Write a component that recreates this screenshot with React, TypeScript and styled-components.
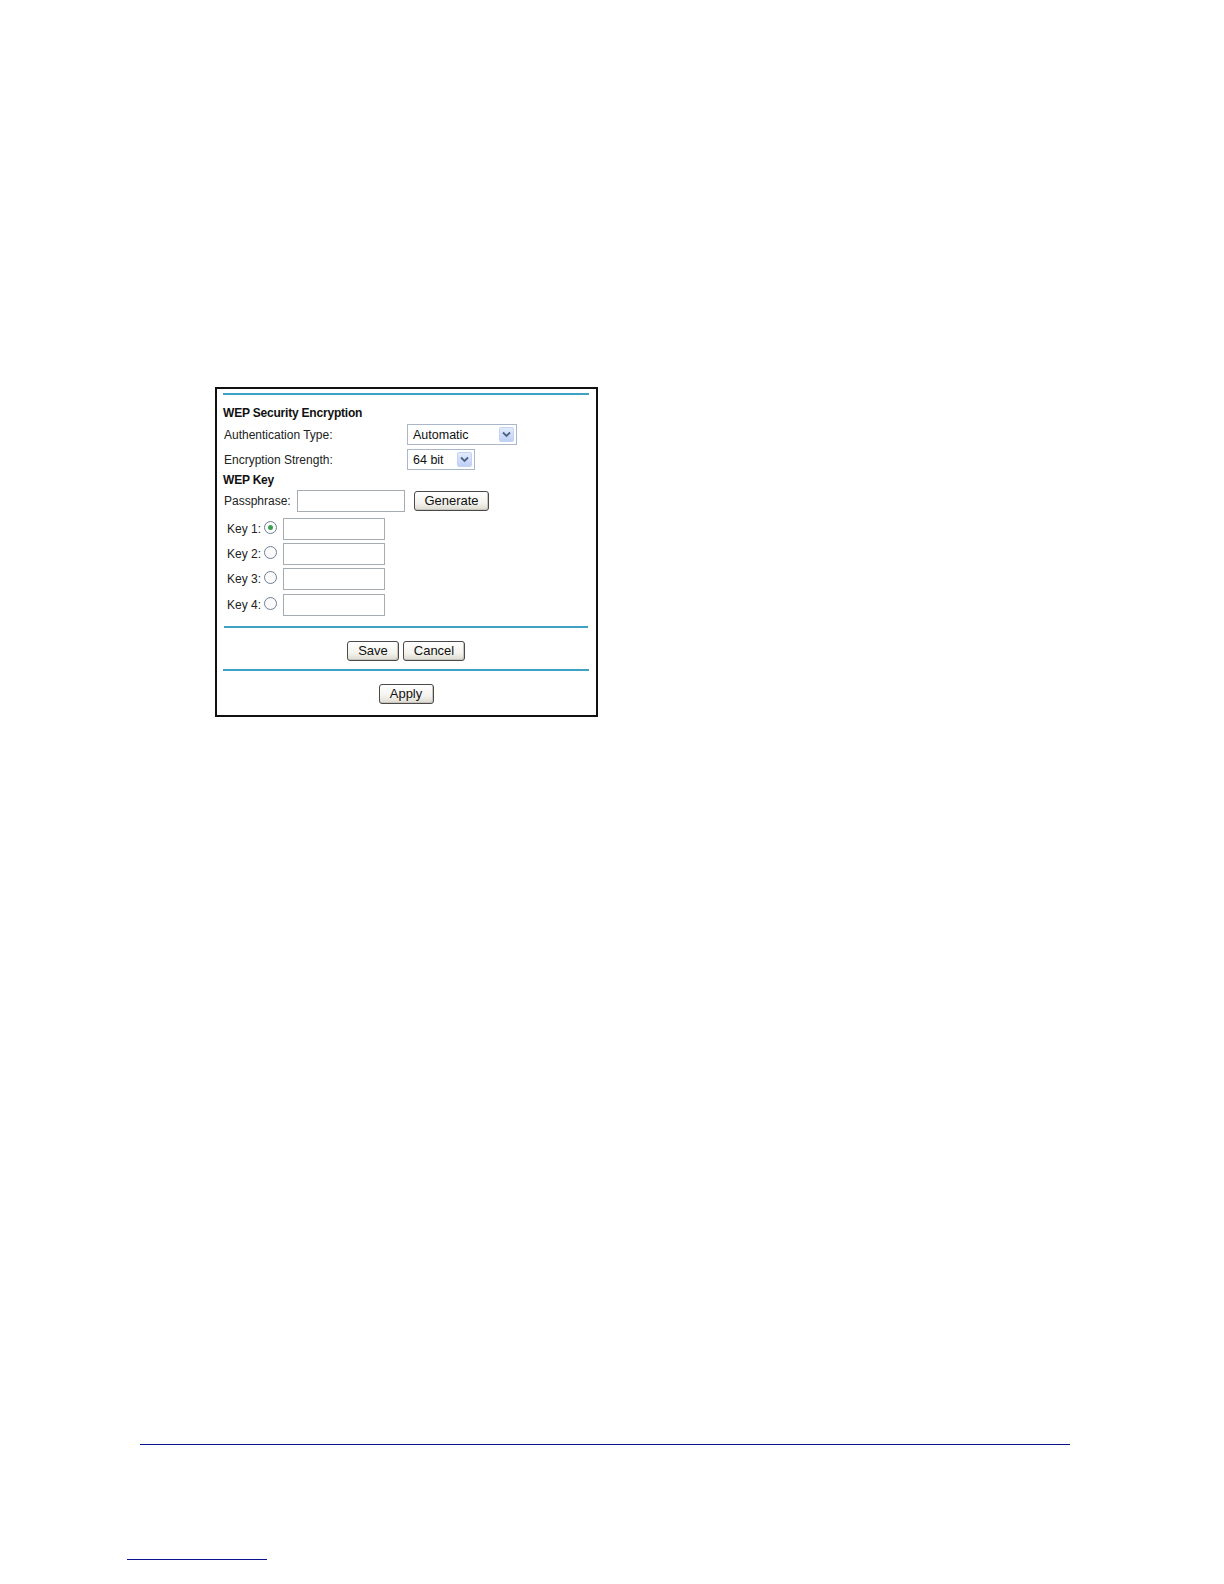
import React from "react";
import styled, { createGlobalStyle } from "styled-components";

const GlobalStyle = createGlobalStyle`
  html, body {
    margin: 0;
    padding: 0;
    background: #ffffff;
  }
  body {
    font-family: "Liberation Sans", Arial, sans-serif;
  }
`;

const Page = styled.div`
  width: 1224px;
  height: 1584px;
  box-sizing: border-box;
  padding-top: 387px;
  display: flex;
  flex-direction: column;
`;

const Frame = styled.div`
  margin-left: 215px;
  width: 383px;
  box-sizing: border-box;
  border: 2px solid #111;
  padding: 4px 7px 11px 6px;
  display: flex;
  flex-direction: column;
  font-size: 12px;
  color: #222;
`;

const Rule = styled.div<{ $top: number; $inset?: number }>`
  height: 2px;
  margin-top: ${(p) => p.$top}px;
  margin-left: ${(p) => p.$inset ?? 0}px;
  margin-right: ${(p) => p.$inset ?? 0}px;
  background: #3fa2c4;
`;

const Heading = styled.div<{ $top: number }>`
  margin-top: ${(p) => p.$top}px;
  line-height: 16px;
  font-weight: bold;
  letter-spacing: -0.2px;
  color: #111;
`;

const FieldRow = styled.div<{ $top: number }>`
  margin-top: ${(p) => p.$top}px;
  display: grid;
  grid-template-columns: 184px auto;
  align-items: center;
  height: 21px;
`;

const Label = styled.span<{ $width?: number }>`
  padding-left: 1px;
  white-space: nowrap;
  ${(p) => (p.$width ? `width: ${p.$width}px;` : "")}
`;

const Select = styled.div<{ $width: number }>`
  width: ${(p) => p.$width}px;
  height: 21px;
  box-sizing: border-box;
  border: 1px solid #a9b7c9;
  display: flex;
  align-items: center;
  justify-content: space-between;
  padding: 0 2px 0 5px;
  font-size: 12.5px;
  color: #111;
  background: #fff;
`;

const Arrow = styled.span`
  width: 15px;
  height: 15px;
  box-sizing: border-box;
  border: 1px solid #c3d3f5;
  background: linear-gradient(#e2ebfd, #bfd0f5);
  border-radius: 2px;
  display: flex;
  align-items: center;
  justify-content: center;
`;

const PassRow = styled.div`
  margin-top: 2px;
  height: 22px;
  display: flex;
  align-items: center;
  gap: 0;
`;

const TextBox = styled.input<{ $width: number }>`
  width: ${(p) => p.$width}px;
  height: 22px;
  box-sizing: border-box;
  border: 1px solid #a5acb2;
  margin: 0;
  padding: 0 3px;
  background: #fff;
  font-family: inherit;
  font-size: 12px;
`;

const Button = styled.button<{ $width: number; $left?: number }>`
  width: ${(p) => p.$width}px;
  height: 20px;
  margin-left: ${(p) => p.$left ?? 0}px;
  box-sizing: border-box;
  border: 1px solid #4a4a4a;
  border-radius: 3px;
  background: linear-gradient(#ffffff 0%, #f4f3ee 60%, #dcdad0 100%);
  box-shadow: inset -1px -1px 0 #c8c6bc;
  font-family: inherit;
  font-size: 13px;
  color: #111;
  padding: 0;
  line-height: 18px;
`;

const KeyRow = styled.div<{ $top: number }>`
  margin-top: ${(p) => p.$top}px;
  height: 22px;
  display: flex;
  align-items: center;
  padding-left: 4px;
`;

const KeyLabel = styled.span`
  width: 37px;
  white-space: nowrap;
`;

const Radio = styled.span<{ $on?: boolean }>`
  width: 13px;
  height: 13px;
  box-sizing: border-box;
  border: 1px solid #6f7f97;
  border-radius: 50%;
  background: #fbfbfb;
  display: flex;
  align-items: center;
  justify-content: center;
  margin-right: 6px;
  margin-top: -3px;

  &::after {
    content: "";
    display: ${(p) => (p.$on ? "block" : "none")};
    width: 5px;
    height: 5px;
    border-radius: 50%;
    background: #3ba152;
  }
`;

const ButtonBar = styled.div<{ $top: number }>`
  margin-top: ${(p) => p.$top}px;
  display: flex;
  justify-content: center;
  gap: 4px;
`;

const FooterRule = styled.div<{ $top: number; $left: number; $width: number }>`
  margin-top: ${(p) => p.$top}px;
  margin-left: ${(p) => p.$left}px;
  width: ${(p) => p.$width}px;
  height: 1px;
  background: #0b1290;
`;

const Chevron = () => (
  <svg width="9" height="7" viewBox="0 0 9 7">
    <path d="M1 1.5 L4.5 5 L8 1.5" fill="none" stroke="#4d6185" strokeWidth="1.8" />
  </svg>
);

const keys = [
  { n: 1, top: 6, on: true },
  { n: 2, top: 3 },
  { n: 3, top: 3 },
  { n: 4, top: 4 },
];

export default function App() {
  return (
    <>
      <GlobalStyle />
      <Page>
        <Frame>
          <Rule $top={0} />
          <Heading $top={10}>WEP Security Encryption</Heading>
          <FieldRow $top={3}>
            <Label>Authentication Type:</Label>
            <Select $width={110}>
              Automatic
              <Arrow>
                <Chevron />
              </Arrow>
            </Select>
          </FieldRow>
          <FieldRow $top={4}>
            <Label>Encryption Strength:</Label>
            <Select $width={68}>
              64 bit
              <Arrow>
                <Chevron />
              </Arrow>
            </Select>
          </FieldRow>
          <Heading $top={2}>WEP Key</Heading>
          <PassRow>
            <Label $width={73}>Passphrase:</Label>
            <TextBox $width={108} />
            <Button $width={75} $left={9}>Generate</Button>
          </PassRow>
          {keys.map((k) => (
            <KeyRow key={k.n} $top={k.top}>
              <KeyLabel>Key {k.n}:</KeyLabel>
              <Radio $on={k.on} />
              <TextBox $width={102} />
            </KeyRow>
          ))}
          <Rule $top={10} $inset={1} />
          <ButtonBar $top={13}>
            <Button $width={52}>Save</Button>
            <Button $width={62}>Cancel</Button>
          </ButtonBar>
          <Rule $top={8} />
          <ButtonBar $top={13}>
            <Button $width={55}>Apply</Button>
          </ButtonBar>
        </Frame>
        <FooterRule $top={727} $left={140} $width={930} />
        <FooterRule $top={114} $left={127} $width={140} />
      </Page>
    </>
  );
}
